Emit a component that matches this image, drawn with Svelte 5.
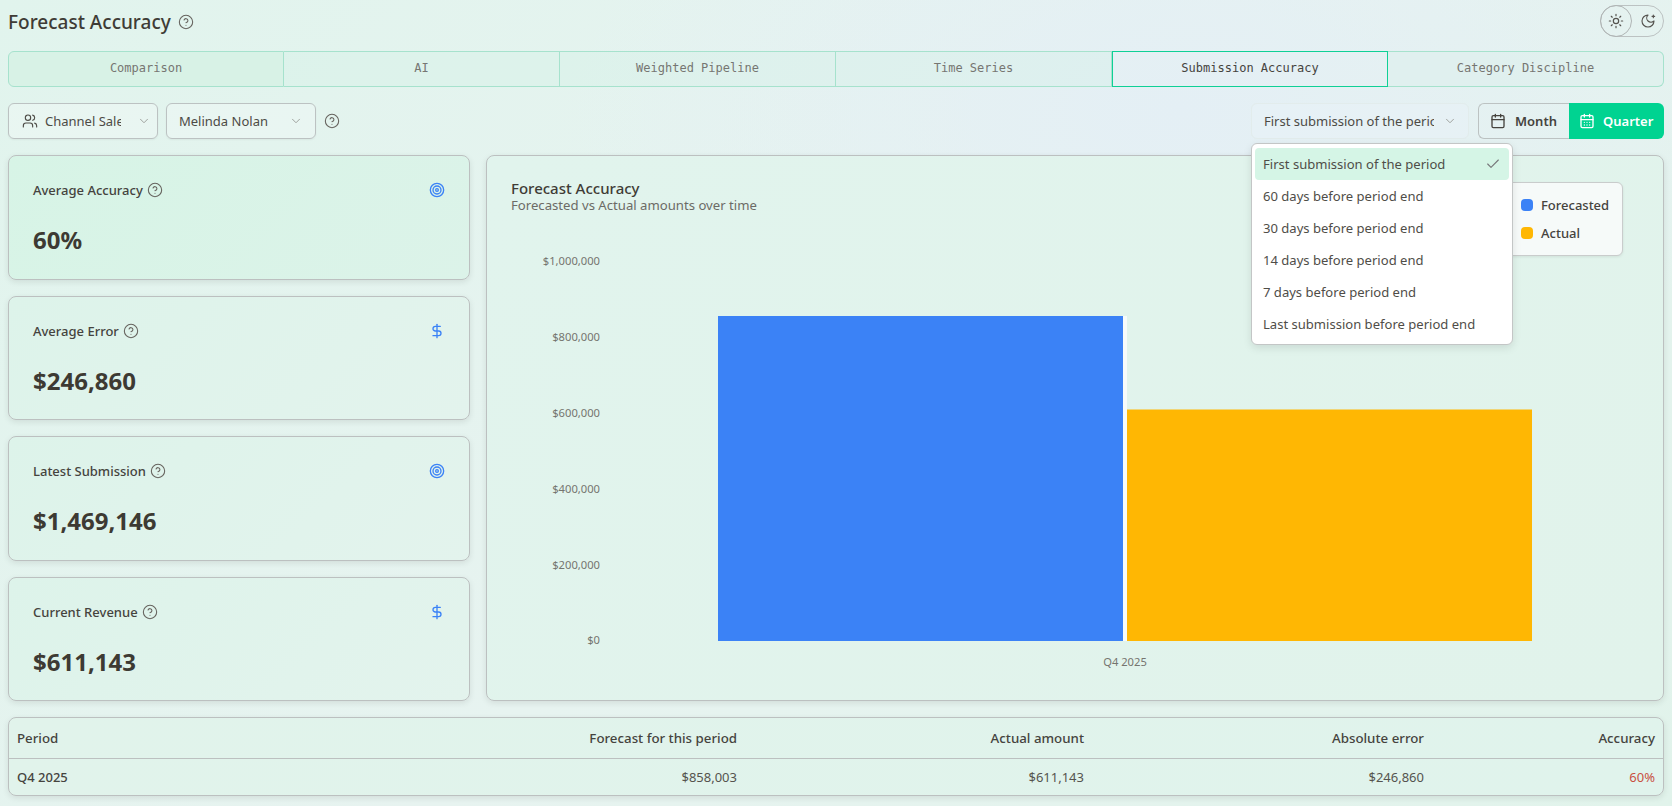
<script>
  const tabs = ['Comparison', 'AI', 'Weighted Pipeline', 'Time Series', 'Submission Accuracy', 'Category Discipline'];
  const cards = [
    { label: 'Average Accuracy', value: '60%', icon: 'target' },
    { label: 'Average Error', value: '$246,860', icon: 'dollar' },
    { label: 'Latest Submission', value: '$1,469,146', icon: 'target' },
    { label: 'Current Revenue', value: '$611,143', icon: 'dollar' }
  ];
  const options = ['First submission of the period', '60 days before period end', '30 days before period end', '14 days before period end', '7 days before period end', 'Last submission before period end'];
  const ticks = [['$1,000,000', 261], ['$800,000', 337], ['$600,000', 413], ['$400,000', 489], ['$200,000', 565], ['$0', 640]];
</script>

{#snippet help(size)}
  <svg class="help" width={size} height={size} viewBox="0 0 24 24" fill="none" stroke="currentColor" stroke-width="1.6" stroke-linecap="round" stroke-linejoin="round"><circle cx="12" cy="12" r="10"/><path d="M9.09 9a3 3 0 0 1 5.83 1c0 2-3 3-3 3"/><path d="M12 17h.01"/></svg>
{/snippet}
{#snippet chevron()}
  <svg class="chev" width="14" height="14" viewBox="0 0 24 24" fill="none" stroke="currentColor" stroke-width="1.6" stroke-linecap="round" stroke-linejoin="round"><path d="m6 9 6 6 6-6"/></svg>
{/snippet}

<div class="page">
  <header class="top">
    <div class="title"><h1>Forecast Accuracy</h1>{@render help(16)}</div>
    <div class="theme">
      <span class="sun"><svg width="16" height="16" viewBox="0 0 24 24" fill="none" stroke="currentColor" stroke-width="1.8" stroke-linecap="round" stroke-linejoin="round"><circle cx="12" cy="12" r="4"/><path d="M12 2v2M12 20v2M4.93 4.93l1.41 1.41M17.66 17.66l1.41 1.41M2 12h2M20 12h2M6.34 17.66l-1.41 1.41M19.07 4.93l-1.41 1.41"/></svg></span>
      <span class="moon"><svg width="16" height="16" viewBox="0 0 24 24" fill="none" stroke="currentColor" stroke-width="1.7" stroke-linecap="round" stroke-linejoin="round"><path d="M12 3a6 6 0 0 0 9 9 9 9 0 1 1-9-9Z"/><path d="M20 3v4M22 5h-4"/></svg></span>
    </div>
  </header>

  <nav class="tabs">
    {#each tabs as t, i}
      <div class="tab" class:active={i === 4} class:last={i === 5}>{t}</div>
    {/each}
  </nav>

  <div class="filters">
    <div class="left">
      <div class="select s1">
        <svg width="16" height="16" viewBox="0 0 24 24" fill="none" stroke="currentColor" stroke-width="1.7" stroke-linecap="round" stroke-linejoin="round"><path d="M16 21v-2a4 4 0 0 0-4-4H6a4 4 0 0 0-4 4v2"/><circle cx="9" cy="7" r="4"/><path d="M22 21v-2a4 4 0 0 0-3-3.87"/><path d="M16 3.13a4 4 0 0 1 0 7.75"/></svg>
        <span class="clip c1">Channel Sales</span>{@render chevron()}
      </div>
      <div class="select s2"><span class="clip c2">Melinda Nolan</span>{@render chevron()}</div>
      {@render help(16)}
    </div>
    <div class="right">
      <div class="select s3"><span class="clip c3">First submission of the period</span>{@render chevron()}</div>
      <div class="seg">
        <div class="month">
          <svg width="16" height="16" viewBox="0 0 24 24" fill="none" stroke="currentColor" stroke-width="2" stroke-linecap="round" stroke-linejoin="round"><path d="M8 2v4M16 2v4"/><rect x="3" y="4" width="18" height="18" rx="2"/><path d="M3 10h18"/></svg>
          <span>Month</span>
        </div>
        <div class="quarter">
          <svg width="16" height="16" viewBox="0 0 24 24" fill="none" stroke="currentColor" stroke-width="2" stroke-linecap="round" stroke-linejoin="round"><path d="M8 2v4M16 2v4"/><rect x="3" y="4" width="18" height="18" rx="2"/><path d="M3 10h18M8 14h.01M12 14h.01M16 14h.01M8 18h.01M12 18h.01M16 18h.01"/></svg>
          <span>Quarter</span>
        </div>
      </div>
    </div>
    <div class="menu">
      {#each options as o, i}
        <div class="opt" class:sel={i === 0}>
          <span>{o}</span>
          {#if i === 0}
            <svg width="16" height="16" viewBox="0 0 24 24" fill="none" stroke="currentColor" stroke-width="1.7" stroke-linecap="round" stroke-linejoin="round"><path d="M20 6 9 17l-5-5"/></svg>
          {/if}
        </div>
      {/each}
    </div>
  </div>

  <main class="body">
    <div class="cards">
      {#each cards as c, i}
        <section class="card stat" class:first={i === 0}>
          <div class="stat-head">
            <div class="stat-label"><span>{c.label}</span>{@render help(16)}</div>
            {#if c.icon === 'target'}
              <svg class="blue" width="16" height="16" viewBox="0 0 24 24" fill="none" stroke="currentColor" stroke-width="2" stroke-linecap="round" stroke-linejoin="round"><circle cx="12" cy="12" r="10"/><circle cx="12" cy="12" r="6"/><circle cx="12" cy="12" r="2"/></svg>
            {:else}
              <svg class="blue" width="16" height="16" viewBox="0 0 24 24" fill="none" stroke="currentColor" stroke-width="2" stroke-linecap="round" stroke-linejoin="round"><path d="M12 2v20"/><path d="M17 5H9.5a3.5 3.5 0 0 0 0 7h5a3.5 3.5 0 0 1 0 7H6"/></svg>
            {/if}
          </div>
          <div class="stat-value">{c.value}</div>
        </section>
      {/each}
    </div>

    <section class="card chart">
      <div class="chart-head">
        <h2>Forecast Accuracy</h2>
        <p>Forecasted vs Actual amounts over time</p>
      </div>
      <svg class="plot" viewBox="487 216 1176 484" width="1176" height="484">
        {#each ticks as [label, y]}
          <text x="600" y={y + 4} text-anchor="end">{label}</text>
        {/each}
        <rect x="718" y="316" width="405" height="325" fill="#3b82f6"/>
        <rect x="1123" y="316" width="4" height="325" fill="#f7fbfa"/>
        <rect x="1127" y="409.5" width="405" height="231.5" fill="#ffb703"/>
        <text x="1125" y="666" text-anchor="middle">Q4 2025</text>
      </svg>
      <div class="legend">
        <div class="li"><i class="dot b"></i>Forecasted</div>
        <div class="li"><i class="dot y"></i>Actual</div>
      </div>
    </section>
  </main>

  <section class="card tablecard">
    <table>
      <thead>
        <tr><th class="p">Period</th><th>Forecast for this period</th><th>Actual amount</th><th>Absolute error</th><th>Accuracy</th></tr>
      </thead>
      <tbody>
        <tr><td class="p strong">Q4 2025</td><td>$858,003</td><td>$611,143</td><td>$246,860</td><td class="red">60%</td></tr>
      </tbody>
    </table>
  </section>
</div>

<style>
  :global(body) { margin: 0; }
  .page {
    box-sizing: border-box;
    width: 1672px;
    height: 806px;
    overflow: hidden;
    padding: 5px 8px 0;
    font-family: "Noto Sans", "Open Sans", sans-serif;
    color: #3f3c36;
    background:
      radial-gradient(ellipse 620px 320px at 1180px 110px, #e4eff5 0%, rgba(228,239,245,0) 100%),
      linear-gradient(135deg, #e1f4ed 0%, #e7f3f0 50%, #e1f3eb 100%);
  }
  .top { display: flex; justify-content: space-between; align-items: center; height: 32px; }
  .title { display: flex; align-items: center; gap: 7px; padding-top: 1px; }
  h1 { margin: 0; font-size: 19px; font-weight: 500; line-height: 26px; color: #3f3c36; }
  .help { color: #66635e; flex: none; }
  .theme { display: flex; width: 64px; height: 32px; box-sizing: border-box; border: 1px solid #bcc2c2; border-radius: 16px; color: #55534f; }
  .sun { width: 32px; height: 32px; margin: -1px 0 0 -1px; box-sizing: border-box; border: 1px solid #b0b5b5; border-radius: 50%; display: flex; align-items: center; justify-content: center; }
  .moon { flex: 1; display: flex; align-items: center; justify-content: center; padding-bottom: 1px; }

  .tabs { margin-top: 14px; display: grid; grid-template-columns: repeat(6, 1fr); height: 36px; border-radius: 6px; box-sizing: border-box; }
  .tab {
    display: flex; align-items: center; justify-content: center; padding-bottom: 2px;
    font: 12px "DejaVu Sans Mono", monospace; color: #767672;
    border: 1px solid #a6e2cd; border-left: 0; background: rgba(210,242,228,.35);
  }
  .tab:first-child { border-left: 1px solid #a6e2cd; border-radius: 6px 0 0 6px; background: #d8f2e6; }
  .tab.last { border-radius: 0 6px 6px 0; background: rgba(220,240,235,.5); }
  .tab.active { border: 1.5px solid #0fd096; color: #45433e; background: transparent; }

  .filters { position: relative; margin-top: 16px; display: flex; justify-content: space-between; height: 36px; }
  .left { display: flex; align-items: center; gap: 8px; }
  .right { display: flex; align-items: center; gap: 9px; }
  .select {
    box-sizing: border-box; height: 36px; display: flex; align-items: center;
    border: 1px solid #bcc2c2; border-radius: 6px; font-size: 13px; color: #4d4b46;
    background: rgba(240,248,246,.5); box-shadow: 0 1px 2px rgba(0,0,0,.05);
  }
  .s1 { width: 150px; padding-left: 13px; gap: 7px; }
  .s2 { width: 150px; padding-left: 12px; }
  .s3 { width: 218px; padding-left: 12px; border-color: #e2ecec; box-shadow: none; background: rgba(232,242,246,.6); }
  .clip { display: block; overflow: hidden; white-space: nowrap; flex: none; }
  .c1 { width: 76px; }
  .c2 { width: 102px; }
  .c3 { width: 170px; }
  .chev { color: #9a9c98; margin-left: 9px; flex: none; }
  .s2 .chev { margin-left: 8px; }
  .s3 .chev { margin-left: 9px; }

  .seg { display: flex; width: 186px; height: 36px; border-radius: 6px; box-sizing: border-box; }
  .month, .quarter { display: flex; align-items: center; gap: 9px; font-size: 13px; font-weight: 600; box-sizing: border-box; }
  .month { width: 91px; padding-left: 11px; border: 1px solid #bcc2c2; border-right: 0; border-radius: 6px 0 0 6px; color: #45433e; }
  .quarter { width: 95px; padding-left: 10px; background: #00d391; color: #fff; border-radius: 0 6px 6px 0; gap: 8px; }

  .menu {
    position: absolute; z-index: 5; top: 40px; left: 1243px; width: 262px; height: 202px;
    box-sizing: border-box; padding: 4px 3px; background: #fff; border: 1px solid #c3c6c6;
    border-radius: 6px; box-shadow: 0 3px 8px rgba(0,0,0,.1);
  }
  .opt { height: 32px; padding: 0 8px; display: flex; align-items: center; justify-content: space-between; font-size: 13.05px; color: #4f4d48; border-radius: 4px; }
  .opt.sel { background: #d5f5e6; }
  .opt svg { color: #77777a; margin-right: 0; }

  .body { margin-top: 16px; display: grid; grid-template-columns: 462px 1178px; gap: 16px; height: 546px; }
  .card {
    box-sizing: border-box; border: 1px solid #bcc0c0; border-radius: 8px;
    box-shadow: 0 2px 6px rgba(0,0,0,.09);
  }
  .cards { display: grid; grid-template-rows: repeat(4, 1fr); gap: 16px; }
  .stat { padding: 22px 24px 0; background: linear-gradient(135deg, #ddf3ea, #e3f3ed); }
  .stat.first { background: linear-gradient(135deg, #d7f4e6, #dcf3e9); }
  .stat-head { display: flex; justify-content: space-between; align-items: center; height: 24px; }
  .stat-label { display: flex; align-items: center; gap: 4px; font-size: 13px; font-weight: 500; color: #45433e; }
  .blue { color: #3b82f6; }
  .stat-value { margin-top: 21px; font-size: 24px; font-weight: 700; line-height: 34px; color: #3d3a33; }

  .chart { position: relative; background: linear-gradient(135deg, #e1f4ed, #e1f3eb); }
  .chart-head { box-sizing: border-box; height: 60px; padding: 23px 0 0 24px; }
  h2 { margin: 0; font-size: 15px; font-weight: 500; line-height: 18px; color: #3f3c36; }
  .chart-head p { margin: 0; font-size: 13.15px; line-height: 16px; color: #6c6b66; }
  .plot { display: block; }
  .plot text { font-size: 11.2px; fill: #75756f; font-family: "Noto Sans", sans-serif; }
  .legend {
    position: absolute; top: 26px; right: 40px; width: 141px; height: 74px; box-sizing: border-box;
    padding: 8px 12px; background: #f6faf9; border: 1px solid #c9cccc; border-radius: 6px;
    display: flex; flex-direction: column; align-items: flex-end; box-shadow: 0 1px 3px rgba(0,0,0,.08);
  }
  .li { width: 89px; height: 28px; display: flex; align-items: center; gap: 8px; font-size: 13px; font-weight: 500; color: #45433e; }
  .dot { width: 12px; height: 12px; border-radius: 4px; flex: none; }
  .dot.b { background: #3b82f6; }
  .dot.y { background: #ffb703; }

  .tablecard { margin-top: 16px; height: 79px; background: linear-gradient(135deg, #e1f3eb, #e0f3ec); overflow: hidden; }
  table { width: 100%; border-collapse: collapse; table-layout: fixed; font-size: 13px; }
  th { height: 40px; box-sizing: border-box; padding: 0 8px; text-align: right; font-size: 13.3px; font-weight: 500; color: #45433e; border-bottom: 1px solid #bcc0c0; white-space: nowrap; }
  td { height: 37px; padding: 0 8px; text-align: right; color: #55534e; }
  th:nth-child(1) { width: 200px; }
  th:nth-child(2) { width: 536px; }
  th:nth-child(3) { width: 347px; }
  th:nth-child(4) { width: 340px; }
  th.p, td.p { text-align: left; }
  .strong { font-weight: 500; color: #45433e; }
  .red { color: #c9503f; }
</style>
